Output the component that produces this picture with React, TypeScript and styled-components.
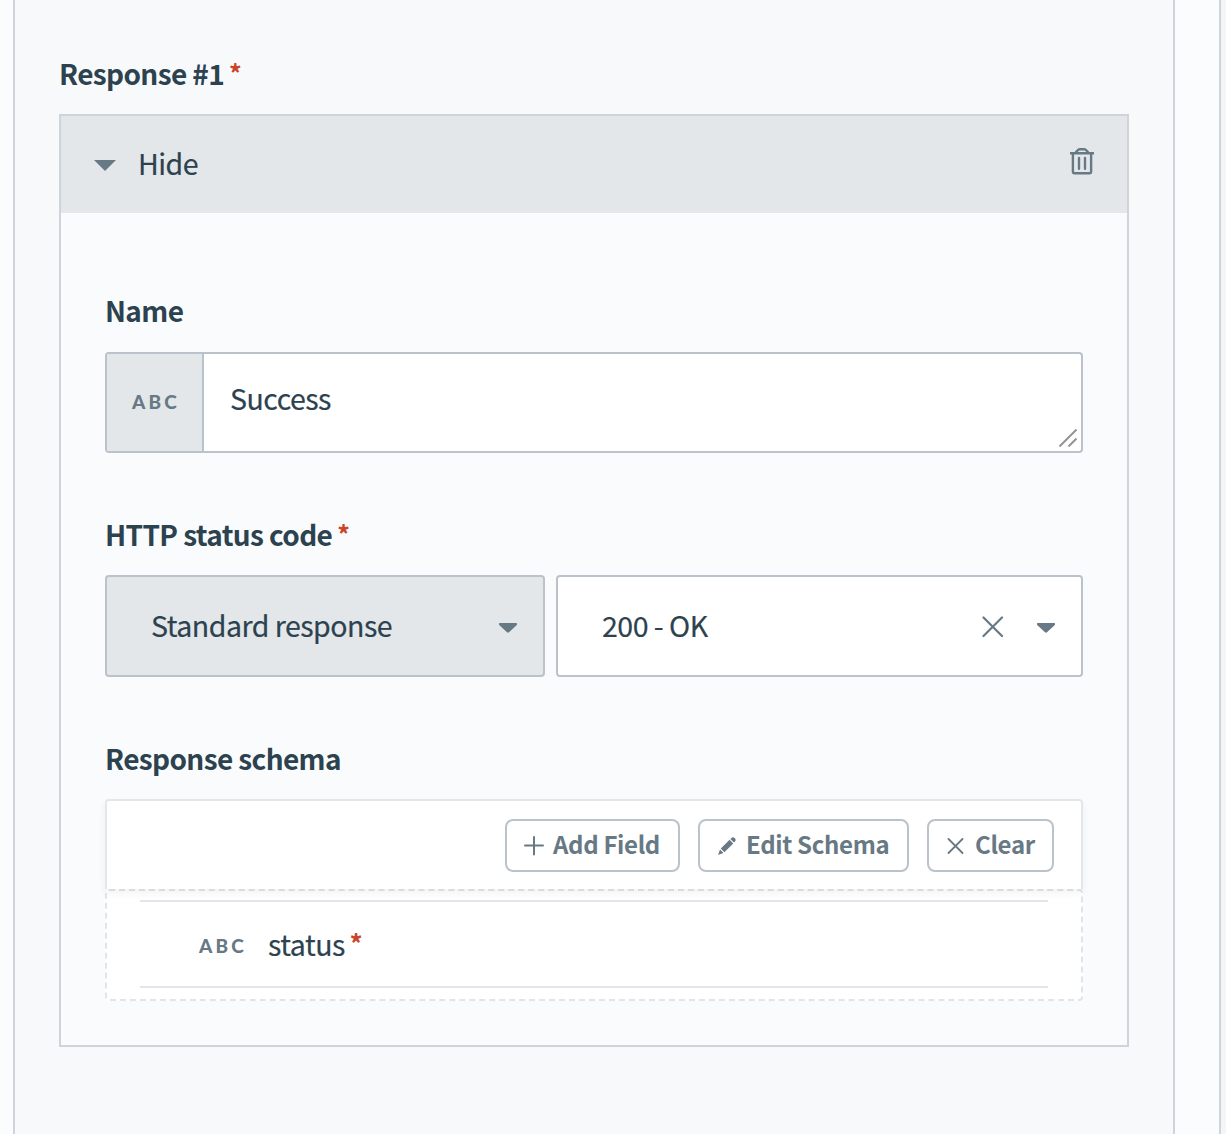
import React from "react";
import styled, { createGlobalStyle } from "styled-components";

const GlobalStyle = createGlobalStyle`
  * { box-sizing: border-box; }
  html, body { margin: 0; background: #f4f5f7; }
  body {
    font-family: "Source Sans Pro", "Noto Sans CJK SC", sans-serif;
    font-size: 28px;
    color: #2c424f;
    overflow: hidden;
  }
`;

const ink = "#677985";
const line = "#ced4da";
const field = "#bac3cb";
const soft = "#e4e7ea";

const Page = styled.div`
  width: 1221px;
  height: 1134px;
  padding-left: 13px;
  border-right: 2px solid ${line};
  background: #fbfcfe;
`;

const Panel = styled.section`
  width: 1162px;
  height: 100%;
  padding: 54px 44px 0;
  border: solid ${line};
  border-width: 0 2px;
  background: #f8f9fb;
`;

const Label = styled.div`
  display: flex;
  height: 40px;
  line-height: 39px;
  font-size: 28px;
  font-weight: 700;
  white-space: pre;
  letter-spacing: -0.62px;
`;

const Star = styled.span`
  margin-left: 5px;
  color: #c9452a;
  font-size: 25px;
  font-weight: 700;
  letter-spacing: 0;
  line-height: 36px;
`;

const Card = styled.div`
  height: 933px;
  margin-top: 20px;
  border: 2px solid ${line};
  background: #fafbfd;
`;

const CardHeader = styled.header`
  display: flex;
  align-items: center;
  height: 97px;
  padding: 0 33px;
  background: ${soft};
`;

const HeaderCaret = styled.svg`
  margin-top: 2px;
`;

const Text = styled.span`
  flex: 1;
  margin-top: -2px;
  line-height: 40px;
  font-size: 28.5px;
  white-space: pre;
  letter-spacing: -0.5px;
  -webkit-text-stroke: 0.2px currentColor;
`;

const HeaderText = styled(Text)`
  margin: -3px 0 0 22px;
`;

const Trash = styled.svg`
  margin-bottom: 7px;
`;

const CardBody = styled.div`
  display: flex;
  flex-direction: column;
  gap: 62px;
  padding: 78px 44px 0;
`;

const Group = styled.div`
  display: flex;
  flex-direction: column;
  gap: 20px;
`;

const NameGroup = styled(Group)`
  gap: 21px;
`;

const Input = styled.div`
  display: flex;
  height: 101px;
  border: 2px solid ${field};
  border-radius: 4px;
  background: #fff;
  overflow: hidden;
`;

const Abc = styled.span`
  font-family: Lato, sans-serif;
  font-size: 19px;
  font-weight: 900;
  letter-spacing: 3.2px;
  line-height: 24px;
  color: ${ink};
`;

const InputType = styled.div`
  display: flex;
  align-items: center;
  width: 97px;
  padding: 0 0 1px 25px;
  border-right: 2px solid ${field};
  background: ${soft};
`;

const InputValue = styled.div`
  display: flex;
  flex: 1;
  align-items: flex-end;
  padding: 0 4px 4px 26px;
`;

const InputText = styled(Text)`
  align-self: center;
  margin-top: -6px;
`;

const Row = styled.div`
  display: flex;
  gap: 11px;
`;

const Select = styled.div<{ $width: number; $filled?: boolean }>`
  display: flex;
  align-items: center;
  width: ${(p) => p.$width}px;
  height: 102px;
  padding: 0 26px 0 44px;
  border: 2px solid ${field};
  border-radius: 4px;
  background: ${(p) => (p.$filled ? soft : "#fff")};
`;

const ClearIcon = styled.svg`
  margin: 2px 33px 0 0;
`;

const CaretIcon = styled.svg`
  margin-top: 4px;
`;

const Toolbar = styled.div`
  position: relative;
  display: flex;
  justify-content: flex-end;
  gap: 18px;
  height: 90px;
  padding: 18px 27px 0;
  border: 2px solid ${soft};
  border-bottom: 0;
  border-radius: 4px 4px 0 0;
  background: #fff;
  box-shadow: 0 4px 8px rgba(30, 50, 40, 0.06);
`;

const Button = styled.button<{ $width: number; $left: number; $gap: number }>`
  display: flex;
  align-items: center;
  gap: ${(p) => p.$gap}px;
  width: ${(p) => p.$width}px;
  height: 53px;
  padding: 0 0 0 ${(p) => p.$left}px;
  border: 2px solid ${field};
  border-radius: 8px;
  background: #fff;
  color: ${ink};
  font-family: inherit;
  font-size: 24px;
  font-weight: 700;
  line-height: 36px;
  white-space: nowrap;
  letter-spacing: -0.34px;

  svg { flex: none; }
  span { margin-top: -3px; }
`;

const Fields = styled.div`
  height: 112px;
  padding: 9px 33px 0;
  border: 2px dashed #e1e4e8;
  border-radius: 4px;
  background: #fff;
`;

const FieldRow = styled.div`
  display: flex;
  align-items: center;
  height: 88px;
  padding-left: 59px;
  border: solid #e2e6ea;
  border-width: 2px 0;
`;

const FieldType = styled(Abc)`
  margin-top: 4px;
`;

const FieldName = styled.div`
  display: flex;
  margin-left: 21px;
  line-height: 40px;
  font-size: 28.5px;
  letter-spacing: -0.5px;
  -webkit-text-stroke: 0.2px currentColor;
`;

const Caret = () => (
  <CaretIcon width="18" height="10" viewBox="0 0 18 10" fill={ink}>
    <path d="M0.6 0H17.4Q18 0 18 .8V1.4Q18 2 17.3 2.6L10 9.3Q9 10.2 8 9.3L.7 2.6Q0 2 0 1.4V.8Q0 0 .6 0Z" />
  </CaretIcon>
);

export default function App() {
  return (
    <>
      <GlobalStyle />
      <Page>
        <Panel>
          <Label>Response #1<Star>*</Star></Label>
          <Card>
            <CardHeader>
              <HeaderCaret width="22" height="11" viewBox="0 0 22 11" fill={ink}>
                <path d="M0 0H22L11 11Z" />
              </HeaderCaret>
              <HeaderText>Hide</HeaderText>
              <Trash width="24" height="27" viewBox="0 0 24 27" fill="none" stroke={ink} strokeWidth="2.4">
                <path d="M0 5.2H24M5.8 5Q5.8 4 7 3L8 2Q8.8 1.2 10 1.2H14Q15.2 1.2 16 2L17 3Q18.2 4 18.2 5M2.9 5.3V24Q2.9 25.2 4.1 25.2H19.9Q21.1 25.2 21.1 24V5.3" />
                <path d="M9 10V20.8M15 10V20.8" strokeLinecap="round" />
              </Trash>
            </CardHeader>
            <CardBody>
              <NameGroup>
                <Label>Name</Label>
                <Input>
                  <InputType><Abc>ABC</Abc></InputType>
                  <InputValue>
                    <InputText>Success</InputText>
                    <svg width="18" height="18" viewBox="0 0 18 18" fill="none" stroke="#949494" strokeWidth="2">
                      <path d="M0.5 17.5L17.5 .5M9.5 17.5L17.5 9.5" />
                    </svg>
                  </InputValue>
                </Input>
              </NameGroup>
              <Group>
                <Label>HTTP status code<Star>*</Star></Label>
                <Row>
                  <Select $width={440} $filled>
                    <Text>Standard response</Text>
                    <Caret />
                  </Select>
                  <Select $width={527}>
                    <Text>200 - OK</Text>
                    <ClearIcon width="22" height="22" viewBox="0 0 22 22" fill="none" stroke={ink} strokeWidth="2.2" strokeLinecap="round">
                      <path d="M1.5 1.5L20 20M20 1.5L1.5 20" />
                    </ClearIcon>
                    <Caret />
                  </Select>
                </Row>
              </Group>
              <Group>
                <Label>Response schema</Label>
                <div>
                  <Toolbar>
                    <Button $width={175} $left={17} $gap={9}>
                      <svg width="20" height="20" viewBox="0 0 20 20" fill="none" stroke={ink} strokeWidth="2" strokeLinecap="round">
                        <path d="M1 9.5H19M10 1V18.5" />
                      </svg>
                      <span>Add Field</span>
                    </Button>
                    <Button $width={211} $left={18} $gap={10}>
                      <svg width="18" height="18" viewBox="0 0 18 18" fill={ink}>
                        <path d="M13.4 1Q15.2-.4 16.8 1.2Q18.4 2.8 17 4.6L16 5.6L12.4 2ZM11.6 2.8L15.2 6.4L6.4 15.2L2.8 11.6ZM2 12.6L5.4 16L.6 17.8Q0 17.9 .2 17.4Z" />
                      </svg>
                      <span>Edit Schema</span>
                    </Button>
                    <Button $width={127} $left={18} $gap={11}>
                      <svg width="17" height="16" viewBox="0 0 17 16" fill="none" stroke={ink} strokeWidth="1.8" strokeLinecap="round">
                        <path d="M1.5 1L15.5 15M15.5 1L1.5 15" />
                      </svg>
                      <span>Clear</span>
                    </Button>
                  </Toolbar>
                  <Fields>
                    <FieldRow>
                      <FieldType>ABC</FieldType>
                      <FieldName>status<Star>*</Star></FieldName>
                    </FieldRow>
                  </Fields>
                </div>
              </Group>
            </CardBody>
          </Card>
        </Panel>
      </Page>
    </>
  );
}
